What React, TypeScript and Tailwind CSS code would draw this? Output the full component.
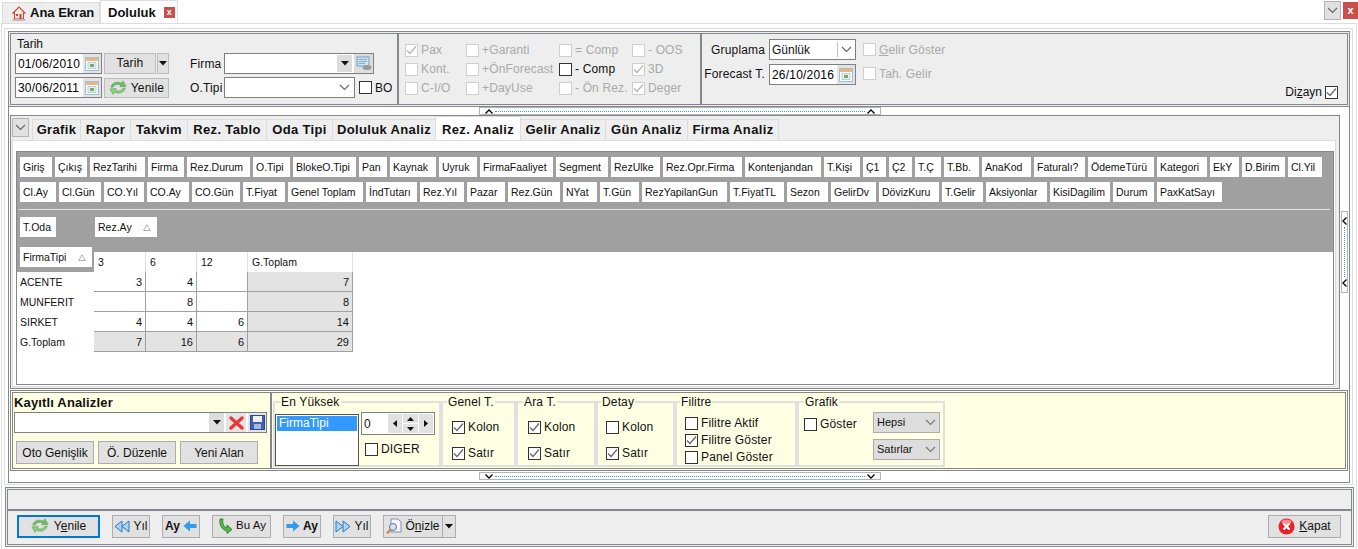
import React from "react";

const fontStyle = "font-['Liberation_Sans',Arial,sans-serif]";

function Check({ on = false, dim = false }: { on?: boolean; dim?: boolean }) {
  return (
    <span className={`flex h-[13px] w-[13px] shrink-0 items-center justify-center border bg-white ${dim ? "border-[#cfcfcf]" : "border-[#333333]"}`}>
      {on && (
        <svg width="11" height="11" viewBox="0 0 11 11">
          <path d="M1 5.5 L4 8.5 L10 1.5" fill="none" stroke={dim ? "#b5b5b5" : "#666666"} strokeWidth="1.2" />
        </svg>
      )}
    </span>
  );
}

function Lbl({ label, on, dim }: { label: React.ReactNode; on?: boolean; dim?: boolean }) {
  return (
    <div className={`flex items-center gap-[3px] text-[12px] leading-[14px] tracking-[0.15px] whitespace-nowrap ${dim ? "text-[#a9a9a9]" : "text-[#111111]"}`}>
      <Check on={on} dim={dim} />
      <span>{label}</span>
    </div>
  );
}

function Tri() {
  return (
    <svg width="8" height="5" viewBox="0 0 8 5">
      <path d="M0 0 H8 L4 4.5 Z" fill="#111111" />
    </svg>
  );
}

function Chev({ color = "#666666" }: { color?: string }) {
  return (
    <svg width="11" height="7" viewBox="0 0 11 7">
      <path d="M1 1 L5.5 5.5 L10 1" fill="none" stroke={color} strokeWidth="1.1" />
    </svg>
  );
}

function CalIcon() {
  return (
    <svg width="14" height="14" viewBox="0 0 14 14">
      <rect x="0.5" y="0.5" width="13" height="13" fill="#ffffff" stroke="#9cc0d8" />
      <rect x="1" y="1" width="12" height="3" fill="#eeb47a" />
      <rect x="3" y="5.5" width="8" height="6" fill="#e4f0f6" stroke="#8cb8cc" strokeWidth="0.6" />
      <rect x="5" y="7" width="4" height="3" fill="#7aa868" />
    </svg>
  );
}

function Cal() {
  return (
    <span className="flex h-[19px] w-[18px] shrink-0 items-center justify-center bg-[#e4e4e4]">
      <CalIcon />
    </span>
  );
}

function DateBox({ value, w }: { value: string; w: string }) {
  return (
    <div className={`flex h-[21px] items-center justify-between border border-[#808080] bg-white text-[12px] tracking-[0.2px] text-black ${w}`}>
      <span className="pl-[2px]">{value}</span>
      <Cal />
    </div>
  );
}

function Refresh({ size = 18 }: { size?: number }) {
  return (
    <svg width={size} height={size * 0.85} viewBox="0 0 20 17">
      <path d="M2 8 C3 3 9 1 14 3.5 L15.5 1 L19 7 L12 7.5 L13 5.5 C9 4 6 5 4.5 8 Z" fill="#6fbf5f" stroke="#4d9a48" strokeWidth="0.6" />
      <path d="M18 9 C17 14 11 16 6 13.5 L4.5 16 L1 10 L8 9.5 L7 11.5 C11 13 14 12 15.5 9 Z" fill="#8fcf7f" stroke="#4d9a48" strokeWidth="0.6" />
    </svg>
  );
}

function Splitter({ w, up }: { w: string; up: boolean }) {
  return (
    <div className={`flex h-[8px] items-center border border-[#b4b4b4] bg-white px-[5px] ${w}`}>
      <svg width="8" height="5" viewBox="0 0 8 5" className="shrink-0">
        <path d={up ? "M0.5 4.5 L4 1 L7.5 4.5" : "M0.5 0.5 L4 4 L7.5 0.5"} fill="none" stroke="#000000" strokeWidth="1.3" />
      </svg>
      <span className="mx-[2px] h-0 flex-1 border-t border-dotted border-[#3a9bf0]" />
      <svg width="8" height="5" viewBox="0 0 8 5" className="shrink-0">
        <path d={up ? "M0.5 4.5 L4 1 L7.5 4.5" : "M0.5 0.5 L4 4 L7.5 0.5"} fill="none" stroke="#000000" strokeWidth="1.3" />
      </svg>
    </div>
  );
}

function SideChev() {
  return (
    <svg width="5" height="8" viewBox="0 0 5 8" className="shrink-0">
      <path d="M4.5 0.5 L1 4 L4.5 7.5" fill="none" stroke="#000000" strokeWidth="1.3" />
    </svg>
  );
}

const row1: [string, string][] = [
  ["Giriş", "w-[32px]"], ["Çıkış", "w-[32px]"], ["RezTarihi", "w-[55px]"], ["Firma", "w-[36px]"], ["Rez.Durum", "w-[63px]"],
  ["O.Tipi", "w-[37px]"], ["BlokeO.Tipi", "w-[63px]"], ["Pan", "w-[28px]"], ["Kaynak", "w-[46px]"], ["Uyruk", "w-[38px]"],
  ["FirmaFaaliyet", "w-[73px]"], ["Segment", "w-[52px]"], ["RezUlke", "w-[49px]"], ["Rez.Opr.Firma", "w-[79px]"], ["Kontenjandan", "w-[76px]"],
  ["T.Kişi", "w-[36px]"], ["Ç1", "w-[23px]"], ["Ç2", "w-[23px]"], ["T.Ç", "w-[26px]"], ["T.Bb.", "w-[35px]"],
  ["AnaKod", "w-[49px]"], ["Faturalı?", "w-[51px]"], ["ÖdemeTürü", "w-[66px]"], ["Kategori", "w-[50px]"], ["EkY", "w-[29px]"],
  ["D.Birim", "w-[43px]"], ["Cl.Yil", "w-[34px]"],
];
const row2: [string, string][] = [
  ["Cl.Ay", "w-[36px]"], ["Cl.Gün", "w-[42px]"], ["CO.Yıl", "w-[40px]"], ["CO.Ay", "w-[42px]"], ["CO.Gün", "w-[48px]"],
  ["T.Fiyat", "w-[42px]"], ["Genel Toplam", "w-[75px]"], ["İndTutarı", "w-[51px]"], ["Rez.Yıl", "w-[44px]"], ["Pazar", "w-[38px]"],
  ["Rez.Gün", "w-[52px]"], ["NYat", "w-[34px]"], ["T.Gün", "w-[39px]"], ["RezYapilanGun", "w-[85px]"], ["T.FiyatTL", "w-[54px]"],
  ["Sezon", "w-[41px]"], ["GelirDv", "w-[45px]"], ["DövizKuru", "w-[60px]"], ["T.Gelir", "w-[41px]"], ["Aksiyonlar", "w-[61px]"],
  ["KisiDagilim", "w-[60px]"], ["Durum", "w-[41px]"], ["PaxKatSayı", "w-[65px]"],
];

function Chip({ t, w, sort }: { t: string; w: string; sort?: boolean }) {
  return (
    <div className={`flex h-[20px] shrink-0 items-center justify-between whitespace-nowrap bg-white pt-[1px] pl-[3px] pr-[6px] text-[10.5px] text-[#111111] ${w}`}>
      <span>{t}</span>
      {sort && (
        <svg width="8" height="7" viewBox="0 0 8 7">
          <path d="M4 0.8 L7.4 6.5 H0.6 Z" fill="none" stroke="#9a9a9a" strokeWidth="0.8" />
        </svg>
      )}
    </div>
  );
}

const rows: [string, string, string, string, string][] = [
  ["ACENTE", "3", "4", "", "7"],
  ["MUNFERIT", "", "8", "", "8"],
  ["SIRKET", "4", "4", "6", "14"],
  ["G.Toplam", "7", "16", "6", "29"],
];

function Btn({ children, w, extra = "" }: { children: React.ReactNode; w: string; extra?: string }) {
  return (
    <div className={`flex h-[23px] shrink-0 items-center justify-center gap-[3px] whitespace-nowrap border border-[#adadad] bg-[#e1e1e1] text-[12px] text-[#111111] ${w} ${extra}`}>
      {children}
    </div>
  );
}

function DblArrow({ dir }: { dir: "l" | "r" }) {
  return (
    <svg width="16" height="13" viewBox="0 0 16 13" className={dir === "r" ? "-scale-x-100" : ""}>
      <path d="M8 1 L1 6.5 L8 12 Z" fill="#a8d4f5" stroke="#2f78b8" />
      <path d="M15 1 L8 6.5 L15 12 Z" fill="#a8d4f5" stroke="#2f78b8" />
    </svg>
  );
}

function Arrow({ dir }: { dir: "l" | "r" }) {
  return (
    <svg width="14" height="12" viewBox="0 0 14 12" className={dir === "l" ? "-scale-x-100" : ""}>
      <path d="M0.5 4 H7 V0.5 L13.5 6 L7 11.5 V8 H0.5 Z" fill="#2f9bef" />
    </svg>
  );
}

function Field({ title, w, lg = "ml-[5px]", children }: { title: string; w: string; lg?: string; children: React.ReactNode }) {
  return (
    <fieldset className={`h-[72px] shrink-0 border-2 border-[#e0e0e0] ${w}`}>
      <legend className={`px-[1px] text-[12px] leading-[14px] tracking-[0.15px] text-[#111111] ${lg}`}>{title}</legend>
      {children}
    </fieldset>
  );
}

function KS({ pad, k, s }: { pad: string; k: boolean; s: boolean }) {
  return (
    <div className={`flex flex-col gap-[12px] pt-[11px] ${pad}`}>
      <Lbl label="Kolon" on={k} />
      <Lbl label="Satır" on={s} />
    </div>
  );
}

export default function App() {
  return (
    <div className={`flex h-[549px] w-[1358px] flex-col overflow-hidden bg-white pl-[1px] ${fontStyle}`}>
      {/* Page tabs */}
      <div className="flex h-[23px] shrink-0 items-start">
        <div className="mt-[2px] ml-[1px] flex h-[21px] w-[98px] items-center gap-[3px] border border-b-0 border-[#dddddd] bg-[#eeeeee] pl-[8px] text-[13px] font-bold text-[#111111]">
          <svg width="16" height="17" viewBox="0 0 16 17" className="shrink-0">
            <path d="M2 8 L8 2 L14 8 L12.5 8 V14 H3.5 V8 Z" fill="#f4e4e0" stroke="#c8453a" strokeWidth="1.1" />
            <rect x="5" y="9" width="2" height="2" fill="#c8453a" />
            <rect x="8.5" y="9" width="2" height="5" fill="#c8453a" />
            <rect x="1.5" y="14" width="13" height="2" fill="#bdbdbd" />
          </svg>
          <span>Ana Ekran</span>
        </div>
        <div className="flex h-[24px] w-[78px] items-center border border-b-0 border-[#dddddd] bg-white pl-[7px] text-[13px] font-bold text-[#111111]">
          <span>Doluluk</span>
          <span className="ml-[8px] flex h-[11px] w-[11px] items-center justify-center bg-[#c94f4f] text-[9px] leading-none text-white">x</span>
        </div>
        <div className="ml-auto mt-[1px] flex h-[19px] w-[17px] items-center justify-center border border-[#b4b4b4] bg-[#e1e1e1]">
          <Chev />
        </div>
        <div className="mt-[2px] ml-[2px] flex h-[17px] w-[15px] items-center justify-center bg-[#c94f4f] text-[11px] font-bold leading-none text-white">x</div>
      </div>

      {/* Outer light frame */}
      <div className="flex h-[526px] w-[1356px] flex-col border border-b-0 border-[#dddddd] pt-[4px] pl-[2px]">
        <div className="flex h-[457px] w-[1349px] flex-col border border-[#dddddd] pt-[2px] pl-[3px]">
          {/* Filter panel */}
          <div className="flex h-[76px] w-[1342px] shrink-0 border-[3px] border-double border-[#85878e] bg-[#eeeeee]">
            {/* Date & firm */}
            <div className="w-[388px] shrink-0 border-r-2 border-[#85878e] pl-[4px]">
              <div className="h-[19px] pl-[2px] pt-[3px] text-[12px] leading-[14px] text-[#111111]">Tarih</div>
              <div className="flex h-[21px] items-center">
                <DateBox value="01/06/2010" w="w-[87px]" />
                <div className="ml-[2px] flex h-[21px] w-[52px] items-center justify-center border border-[#bdbdbd] bg-[#e1e1e1] pb-[1px] text-[12px] tracking-[0.2px] text-[#111111]">Tarih</div>
                <div className="ml-[1px] flex h-[21px] w-[12px] items-center justify-center border border-[#bdbdbd] bg-[#e1e1e1]"><Tri /></div>
                <div className="ml-[21px] w-[34px] text-[12px] tracking-[0.15px] text-[#111111]">Firma</div>
                <div className="flex h-[21px] w-[150px] items-center border border-[#808080] bg-white">
                  <span className="flex-1" />
                  <span className="flex h-[17px] w-[15px] items-center justify-center bg-[#dddddd]"><Tri /></span>
                  <span className="ml-[2px] flex h-[19px] w-[19px] items-center justify-center bg-[#dddddd]">
                    <svg width="16" height="15" viewBox="0 0 16 15">
                      <rect x="1" y="1" width="12" height="9" fill="#cfe3f2" stroke="#6f9fc8" />
                      <path d="M2.5 3.5 H11 M2.5 5.5 H11 M2.5 7.5 H9" stroke="#6f9fc8" strokeWidth="0.8" />
                      <ellipse cx="11" cy="11.5" rx="4.5" ry="2.5" fill="#9a9a9a" />
                    </svg>
                  </span>
                </div>
              </div>
              <div className="mt-[3px] flex h-[21px] items-center">
                <DateBox value="30/06/2011" w="w-[87px]" />
                <div className="ml-[2px] flex h-[20px] w-[65px] items-center justify-center gap-[4px] border border-[#bdbdbd] bg-[#e1e1e1] text-[12px] tracking-[0.2px] text-[#111111]">
                  <Refresh />
                  <span>Yenile</span>
                </div>
                <div className="ml-[21px] w-[34px] text-[12px] tracking-[0.15px] text-[#111111]">O.Tipi</div>
                <div className="flex h-[21px] w-[131px] items-center justify-end border border-[#808080] bg-white pr-[4px]"><Chev /></div>
                <div className="ml-[4px]"><Check /></div>
                <div className="ml-[3px] text-[12px] text-[#111111]">BO</div>
              </div>
            </div>

            {/* Check matrix */}
            <div className="grid w-[303px] shrink-0 grid-cols-[61px_93px_73px_60px] content-start gap-y-[5px] border-r-2 border-[#85878e] pt-[9px] pl-[6px]">
              <Lbl label="Pax" on dim />
              <Lbl label="+Garanti" dim />
              <Lbl label="= Comp" dim />
              <Lbl label="- OOS" dim />
              <Lbl label="Kont." dim />
              <Lbl label="+ÖnForecast" dim />
              <Lbl label="- Comp" />
              <Lbl label="3D" on dim />
              <Lbl label="C-I/O" dim />
              <Lbl label="+DayUse" dim />
              <Lbl label="- Ön Rez." dim />
              <Lbl label="Deger" on dim />
            </div>

            {/* Grouping */}
            <div className="flex min-w-0 flex-1 flex-col pt-[5px]">
              <div className="flex h-[21px] items-center">
                <div className="w-[63px] text-right text-[12px] tracking-[0.15px] text-[#111111]">Gruplama</div>
                <div className="ml-[4px] flex h-[21px] w-[87px] items-center border border-[#808080] bg-white pl-[2px] text-[12px] text-[#111111]">
                  <span className="flex-1">Günlük</span>
                  <span className="flex h-[15px] w-[18px] items-center justify-center border-l border-[#c0c0c0]"><Chev /></span>
                </div>
                <div className="ml-[7px]"><Lbl label={<><u>G</u>elir Göster</>} dim /></div>
              </div>
              <div className="mt-[4px] flex h-[21px] items-center">
                <div className="w-[63px] pb-[2px] text-right text-[12px] tracking-[0.15px] whitespace-nowrap text-[#111111]">Forecast T.</div>
                <div className="ml-[4px]"><DateBox value="26/10/2016" w="w-[87px]" /></div>
                <div className="ml-[7px] pb-[2px]"><Lbl label="Tah. Gelir" dim /></div>
              </div>
              <div className="mt-auto mb-[6px] flex items-center justify-end gap-[3px] pr-[9px] text-[12px] leading-[14px] text-[#111111]">
                <span>Di<u>z</u>ayn</span>
                <Check on />
              </div>
            </div>
          </div>

          {/* Gray frame */}
          <div className="flex h-[376px] w-[1342px] shrink-0 flex-col border-x border-b border-[#85878e]">
            <div className="ml-[470px] shrink-0"><Splitter w="w-[402px]" up /></div>

            <div className="flex h-[274px] shrink-0">
              {/* Main tab panel */}
              <div className="ml-[1px] flex h-[274px] w-[1330px] shrink-0 flex-col border border-[#85878e] bg-[#eeeeee]">
                <div className="flex h-[24px] shrink-0 items-end pl-[1px]">
                  <div className="mb-[3px] flex h-[19px] w-[17px] items-center justify-center border border-[#b4b4b4] bg-[#e1e1e1]"><Chev /></div>
                  <div className="ml-[3px] flex items-end text-[13px] font-bold tracking-[0.35px] text-[#111111]">
                    <div className="flex h-[21px] w-[49px] items-center justify-center border-t border-r border-l border-[#dddddd]">Grafik</div>
                    <div className="flex h-[21px] w-[50px] items-center justify-center border-t border-r border-[#dddddd]">Rapor</div>
                    <div className="flex h-[21px] w-[57px] items-center justify-center border-t border-r border-[#dddddd]">Takvim</div>
                    <div className="flex h-[21px] w-[79px] items-center justify-center border-t border-r border-[#dddddd]">Rez. Tablo</div>
                    <div className="flex h-[21px] w-[66px] items-center justify-center border-t border-r border-[#dddddd]">Oda Tipi</div>
                    <div className="flex h-[21px] w-[102px] items-center justify-center border-t border-[#dddddd]">Doluluk Analiz</div>
                    <div className="flex h-[24px] w-[86px] items-start justify-center border-x border-t border-[#dddddd] bg-white pt-[3px]">Rez. Analiz</div>
                    <div className="flex h-[21px] w-[85px] items-center justify-center border-t border-r border-[#dddddd]">Gelir Analiz</div>
                    <div className="flex h-[21px] w-[82px] items-center justify-center border-t border-r border-[#dddddd]">Gün Analiz</div>
                    <div className="flex h-[21px] w-[91px] items-center justify-center border-t border-r border-[#dddddd]">Firma Analiz</div>
                  </div>
                </div>

                <div className="ml-[1px] h-[247px] w-[1324px] shrink-0 border border-[#dddddd] bg-white pt-[10px] pl-[3px]">
                  <div className="flex h-[234px] w-[1318px] flex-col border border-[#85878e]">
                    <div className="h-[95px] shrink-0 bg-[#a0a0a0] pt-[5px] pl-[3px]">
                      <div className="flex gap-[3px]">{row1.map(([t, w]) => <Chip key={t} t={t} w={w} />)}</div>
                      <div className="mt-[5px] flex gap-[3px]">{row2.map(([t, w]) => <Chip key={t} t={t} w={w} />)}</div>
                      <div className="mt-[7px] ml-[-1px] mr-[3px] h-px bg-[#e4e4e4]" />
                      <div className="mt-[7px] flex">
                        <Chip t="T.Oda" w="w-[36px]" />
                        <div className="ml-[39px]"><Chip t="Rez.Ay" w="w-[62px]" sort /></div>
                      </div>
                    </div>
                    <div className="flex min-h-0 flex-1">
                      <div className="w-[77px] shrink-0">
                        <div className="h-[25px] bg-[#a0a0a0] pl-[3px]"><Chip t="FirmaTipi" w="w-[72px]" sort /></div>
                        {rows.map((r) => (
                          <div key={r[0]} className="flex h-[20px] items-center pt-[1px] pl-[3px] text-[10.5px] text-[#111111]">{r[0]}</div>
                        ))}
                      </div>
                      <div className="flex-1">
                        <div className="h-[5px] bg-[#a0a0a0]" />
                        <div className="grid w-[259px] grid-cols-[52px_51px_51px_105px] text-[10.5px] text-[#111111]">
                          {["3", "6", "12", "G.Toplam"].map((h) => (
                            <div key={h} className="flex h-[20px] items-center border-r border-[#e0e0e0] pt-[1px] pl-[4px]">{h}</div>
                          ))}
                          {rows.map((r, i) =>
                            [r[1], r[2], r[3], r[4]].map((v, j) => (
                              <div
                                key={`${i}-${j}`}
                                className={`flex h-[20px] items-center justify-end border-r border-b border-[#a0a0a0] pt-[1px] pr-[3px] text-[11px] ${i === 3 || j === 3 ? "bg-[#e3e3e3]" : "bg-white"}`}
                              >
                                {v}
                              </div>
                            ))
                          )}
                        </div>
                      </div>
                    </div>
                  </div>
                </div>
              </div>

              {/* Side splitter */}
              <div className="mt-[96px] ml-[1px] flex h-[82px] w-[7px] shrink-0 flex-col items-center border border-[#b4b4b4] bg-white py-[5px]">
                <SideChev />
                <span className="my-[2px] w-0 flex-1 border-l border-dotted border-[#3a9bf0]" />
                <SideChev />
              </div>
            </div>

            {/* Saved analysis panel */}
            <div className="mt-[1px] ml-[1px] flex h-[81px] w-[1338px] shrink-0 border-[3px] border-double border-[#85878e] bg-[#ffffe4]">
              <div className="w-[259px] shrink-0 border-r-2 border-[#85878e] pl-[1px]">
                <div className="h-[19px] pt-[1px] text-[13px] leading-[18px] font-bold tracking-[0.15px] text-[#111111]">Kayıtlı Analizler</div>
                <div className="flex h-[21px] w-[253px] items-center border border-[#808080] bg-white">
                  <span className="flex-1" />
                  <span className="flex h-[19px] w-[15px] items-center justify-center bg-[#dddddd]"><Tri /></span>
                  <span className="ml-[2px] flex h-[19px] w-[20px] items-center justify-center bg-[#e4e4e4]">
                    <svg width="15" height="14" viewBox="0 0 15 14">
                      <path d="M2 2 L13 12 M13 2 L2 12" stroke="#e63a3a" strokeWidth="3.4" strokeLinecap="round" />
                    </svg>
                  </span>
                  <span className="ml-[2px] flex h-[19px] w-[18px] items-center justify-center bg-[#e4e4e4]">
                    <svg width="15" height="15" viewBox="0 0 15 15">
                      <rect x="0.5" y="0.5" width="14" height="14" fill="#3d62b8" stroke="#2a4a96" />
                      <rect x="3" y="1" width="9" height="6" fill="#f2f2f2" />
                      <rect x="4" y="9" width="7" height="5" fill="#a8b8d8" />
                    </svg>
                  </span>
                </div>
                <div className="mt-[8px] ml-[2px] flex gap-[4px]">
                  <Btn w="w-[78px]">Oto Genişlik</Btn>
                  <Btn w="w-[78px]">Ö. Düzenle</Btn>
                  <Btn w="w-[78px]">Yeni Alan</Btn>
                </div>
              </div>

              <div className="flex items-start pt-[2px] pl-[1px]">
                <Field title="En Yüksek" w="w-[168px]">
                  <div className="flex">
                    <div className="mt-[5px] h-[52px] w-[84px] shrink-0 border border-[#555555] bg-white p-[1px] text-[12px]">
                      <div className="h-[15px] bg-[#3399ff] pl-[2px] leading-[15px] text-white">FirmaTipi</div>
                    </div>
                    <div className="ml-[2px]">
                      <div className="mt-[3px] flex h-[23px] w-[74px] items-center border border-[#808080] bg-white pl-[2px] text-[12px] text-[#111111]">
                        <span className="flex-1">0</span>
                        <span className="flex h-[19px] w-[14px] items-center justify-center bg-[#e1e1e1]">
                          <svg width="4" height="7" viewBox="0 0 4 7"><path d="M4 0 V7 L0 3.5 Z" fill="#111111" /></svg>
                        </span>
                        <span className="ml-[1px] flex h-[19px] w-[15px] flex-col justify-between">
                          <span className="flex h-[9px] items-center justify-center bg-[#e1e1e1]"><svg width="7" height="4" viewBox="0 0 7 4"><path d="M0 4 H7 L3.5 0 Z" fill="#111111" /></svg></span>
                          <span className="flex h-[9px] items-center justify-center bg-[#e1e1e1]"><svg width="7" height="4" viewBox="0 0 7 4"><path d="M0 0 H7 L3.5 4 Z" fill="#111111" /></svg></span>
                        </span>
                        <span className="mr-[1px] ml-[1px] flex h-[19px] w-[14px] items-center justify-center bg-[#e1e1e1]">
                          <svg width="4" height="7" viewBox="0 0 4 7"><path d="M0 0 V7 L4 3.5 Z" fill="#111111" /></svg>
                        </span>
                      </div>
                      <div className="mt-[7px] ml-[4px]"><Lbl label="DIGER" /></div>
                    </div>
                  </div>
                </Field>
                <Field title="Genel T." w="w-[75px]" lg="ml-[4px]"><KS pad="pl-[9px]" k s /></Field>
                <Field title="Ara T." w="w-[80px]"><KS pad="pl-[10px]" k s /></Field>
                <Field title="Detay" w="w-[79px]" lg="ml-[3px]"><KS pad="pl-[8px]" k={false} s /></Field>
                <Field title="Filitre" w="w-[122px]" lg="ml-[3px]">
                  <div className="flex flex-col gap-[3px] pt-[7px] pl-[8px]">
                    <Lbl label="Filitre Aktif" />
                    <Lbl label="Filitre Göster" on />
                    <Lbl label="Panel Göster" />
                  </div>
                </Field>
                <Field title="Grafik" w="w-[148px]">
                  <div className="flex items-start pt-[3px] pl-[5px]">
                    <div className="mt-[5px] w-[57px]"><Lbl label="Göster" /></div>
                    <div className="ml-[12px] flex flex-col gap-[6px]">
                      <div className="flex h-[21px] w-[67px] items-center justify-between border border-[#adadad] bg-[#dddddd] px-[3px] text-[11px] text-[#111111]"><span>Hepsi</span><Chev color="#777777" /></div>
                      <div className="flex h-[21px] w-[67px] items-center justify-between border border-[#adadad] bg-[#dddddd] px-[3px] text-[11px] text-[#111111]"><span>Satırlar</span><Chev color="#777777" /></div>
                    </div>
                  </div>
                </Field>
              </div>
            </div>

            <div className="mt-[1px] ml-[470px] shrink-0"><Splitter w="w-[402px]" up={false} /></div>
          </div>
        </div>

        {/* Bottom bar */}
        <div className="mt-[2px] ml-[1px] flex h-[60px] w-[1349px] shrink-0 flex-col border-[3px] border-double border-[#85878e] bg-[#eeeeee]">
          <div className="h-[21px] shrink-0 border-b-2 border-[#85878e]" />
          <div className="flex flex-1 items-center pl-[9px] pr-[10px] pb-[3px]">
            <div className="flex h-[23px] w-[83px] items-center justify-center gap-[5px] border-2 border-[#0078d7] bg-[#e1e1e1] text-[12px] text-[#111111]">
              <Refresh />
              <span>Y<u>e</u>nile</span>
            </div>
            <Btn w="w-[38px]" extra="ml-[12px]"><DblArrow dir="l" /><span>Yıl</span></Btn>
            <Btn w="w-[38px]" extra="ml-[12px]"><b>Ay</b><Arrow dir="l" /></Btn>
            <Btn w="w-[59px]" extra="ml-[12px]">
              <svg width="16" height="16" viewBox="0 0 16 16">
                <path d="M3 1 L6 1 C5 6 7 9 10 10 L10 7 L15 11.5 L10 15.5 L10 13 C5 12 2 7 3 1 Z" fill="#4fbf3f" stroke="#1f6f2a" strokeWidth="0.8" />
              </svg>
              <span className="text-[11.5px]">Bu Ay</span>
            </Btn>
            <Btn w="w-[38px]" extra="ml-[12px]"><Arrow dir="r" /><b>Ay</b></Btn>
            <Btn w="w-[38px]" extra="ml-[12px]"><DblArrow dir="r" /><span>Yıl</span></Btn>
            <Btn w="w-[60px]" extra="ml-[12px]">
              <svg width="16" height="17" viewBox="0 0 16 17">
                <path d="M5 1 H12 L15 4 V14 H5 Z" fill="#f4f6fa" stroke="#7f8fb0" />
                <circle cx="7" cy="9" r="3.5" fill="#cfe3f5" stroke="#7a6a9a" />
                <path d="M4.5 11.5 L1 15.5" stroke="#c88a3a" strokeWidth="2" />
              </svg>
              <span>Ö<u>n</u>izle</span>
            </Btn>
            <div className="flex h-[23px] w-[13px] items-center justify-center border border-l-0 border-[#adadad] bg-[#e1e1e1]"><Tri /></div>
            <div className="ml-auto flex h-[23px] w-[73px] items-center justify-center gap-[4px] border border-[#adadad] bg-[#e1e1e1] text-[12px] text-[#111111]">
              <svg width="17" height="17" viewBox="0 0 17 17">
                <circle cx="8.5" cy="8.5" r="8" fill="#e8202a" />
                <ellipse cx="8.5" cy="4" rx="5" ry="2.5" fill="#f78a8a" />
                <path d="M5.5 5.5 L11.5 11.5 M11.5 5.5 L5.5 11.5" stroke="#ffffff" strokeWidth="2.4" />
              </svg>
              <span><u>K</u>apat</span>
            </div>
          </div>
        </div>
      </div>
    </div>
  );
}
